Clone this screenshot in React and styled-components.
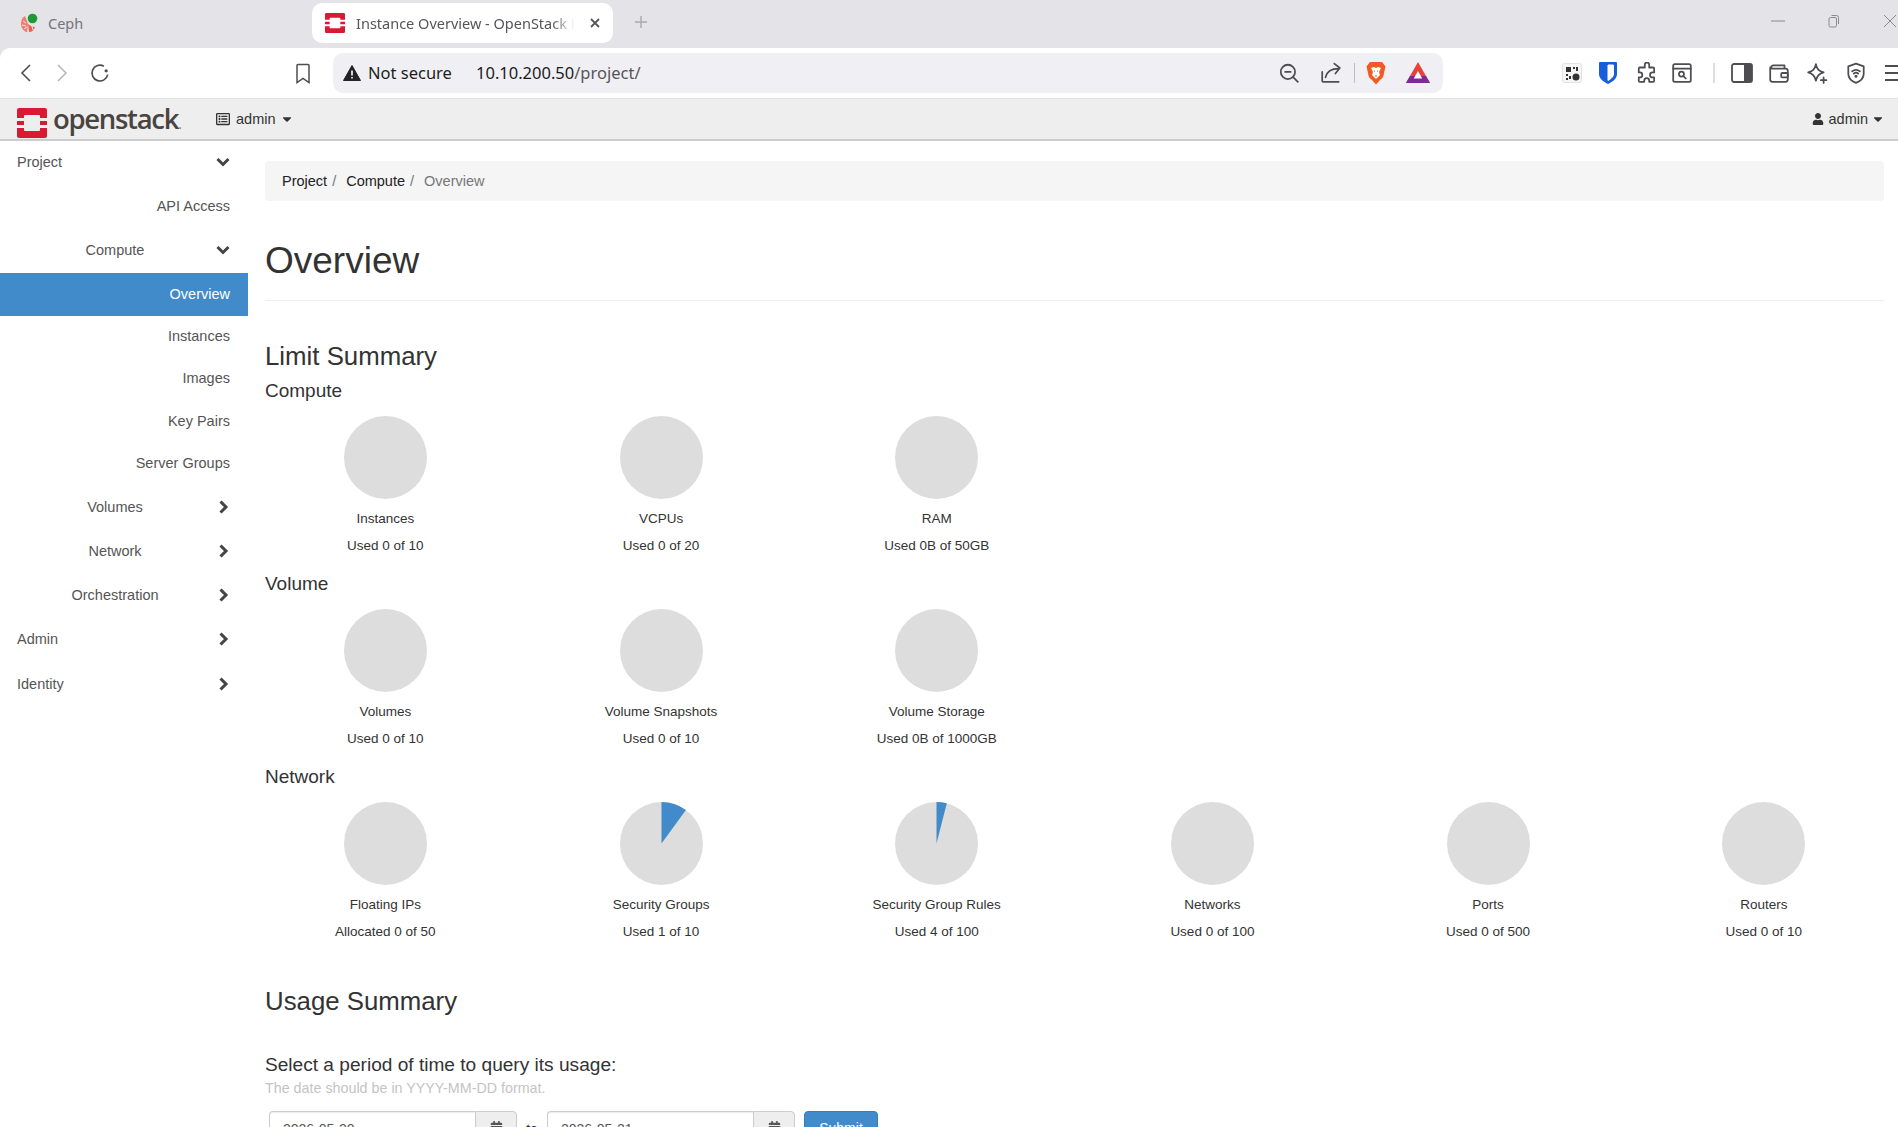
import React from "react";
import styled, { createGlobalStyle } from "styled-components";
import { FaCalendarAlt, FaCaretDown, FaRegListAlt, FaUser } from "react-icons/fa";

const GlobalStyle = createGlobalStyle`
  html, body {
    margin: 0;
    padding: 0;
    height: 1127px;
    overflow: hidden;
    background: #fff;
    font-family: "Liberation Sans", Arial, sans-serif;
    font-size: 14px;
    color: #333;
  }
  * { box-sizing: border-box; }
`;

const Page = styled.div`
  width: 1898px;
  height: 1127px;
  overflow: hidden;
  display: flex;
  flex-direction: column;
  background: #e3e3e8;
`;

/* browser chrome */
const TabStrip = styled.div`
  height: 48px;
  flex: none;
  background: #e3e3e8;
  display: flex;
  align-items: flex-start;
  font-family: "Noto Sans", "Liberation Sans", sans-serif;
`;
const InactiveTab = styled.div`
  width: 312px;
  height: 40px;
  margin-top: 3px;
  padding-left: 19px;
  display: flex;
  align-items: center;
  gap: 9px;
  font-size: 14.5px;
  color: #75757a;
`;
const ActiveTab = styled.div`
  width: 301px;
  height: 40px;
  margin-top: 3px;
  padding: 0 12px 0 13px;
  background: #fff;
  border-radius: 10px;
  display: flex;
  align-items: center;
  gap: 11px;
  font-size: 14.5px;
  color: #55555a;
`;
const TabTitle = styled.span`
  flex: 1;
  white-space: nowrap;
  overflow: hidden;
  margin-right: -1px;
  mask-image: linear-gradient(to right, #000 88%, transparent 98%);
`;
const NewTab = styled.div`
  margin: 14px 0 0 20px;
  color: #a9a9ae;
  line-height: 0;
`;
const WindowButtons = styled.div`
  margin-left: auto;
  display: flex;
  align-items: center;
  gap: 43px;
  margin-top: 14px;
  margin-right: 1px;
  color: #8a8a8f;
  line-height: 0;
`;
const Toolbar = styled.div`
  height: 50px;
  flex: none;
  background: #fff;
  border-radius: 10px 0 0 0;
  display: flex;
  align-items: center;
  padding-left: 16px;
  overflow: hidden;
`;
const ToolIcon = styled.span`
  width: ${(p) => p.$w || 36}px;
  margin-left: ${(p) => p.$ml || 0}px;
  display: flex;
  flex: none;
  justify-content: center;
  color: ${(p) => p.$color || "#4d4d52"};
  line-height: 0;
`;
const NavGroup = styled.div`
  display: flex;
  align-items: center;
  gap: 2px;
  width: 317px;
  flex: none;
`;
const AddressBar = styled.div`
  width: 1110px;
  height: 40px;
  flex: none;
  background: #f0f0f4;
  border-radius: 10px;
  display: flex;
  align-items: center;
  padding: 0 12px 0 10px;
  font-family: "Noto Sans", "Liberation Sans", sans-serif;
  font-size: 16.5px;
  color: #1d1d20;
`;
const NotSecure = styled.span`
  margin: -1px 0 0 7px;
  width: 108px;
  flex: none;
`;
const Url = styled.span`
  flex: 1;
  margin-top: -1px;
  color: #1b1b1e;
  b { font-weight: 400; color: #55555a; }
`;
const BarDivider = styled.span`
  width: 1px;
  height: 20px;
  margin: 0 9px 0 10px;
  background: #bdbdc2;
`;
const Extensions = styled.div`
  display: flex;
  align-items: center;
  margin-left: 112px;
  flex: none;
`;
const ToolDivider = styled.span`
  width: 2px;
  height: 20px;
  margin: 0 11px 0 15px;
  background: #dedee2;
`;

/* horizon top bar */
const TopNav = styled.div`
  height: 43px;
  flex: none;
  background: #eee;
  border-top: 1px solid #e2e2e2;
  border-bottom: 2px solid #ccc;
  display: flex;
  align-items: center;
  padding: 0 13px 0 17px;
`;
const Logo = styled.div`
  display: flex;
  align-items: center;
  gap: 6px;
  width: 199px;
  margin-top: 8px;
  flex: none;
`;
const LogoWord = styled.span`
  font-family: "Open Sans", "Liberation Sans", sans-serif;
  font-size: 27.5px;
  font-weight: 600;
  line-height: 30px;
  letter-spacing: -1.3px;
  color: #4a4440;
  position: relative;
  top: -2px;
  small {
    font-size: 14px;
    font-weight: 400;
    letter-spacing: 0;
    color: #888;
  }
`;
const NavDrop = styled.div`
  display: flex;
  align-items: center;
  gap: ${(p) => (p.$end ? 5 : 6)}px;
  font-size: 14.5px;
  color: #333;
  margin-bottom: 1px;
  ${(p) => p.$end && "margin-left: auto;"}
  svg { flex: none; }
  svg:last-child { margin-left: -2px; }
`;

const Body = styled.div`
  flex: 1;
  display: flex;
  min-height: 0;
  background: #fff;
`;

/* sidebar */
const Sidebar = styled.nav`
  width: 248px;
  flex: none;
  padding-top: 1px;
  color: #555;
`;
const NavRow = styled.div`
  height: ${(p) => p.$h || 44}px;
  margin-bottom: ${(p) => p.$mb || 0}px;
  display: flex;
  align-items: center;
  padding: 0 18px ${(p) => (p.$active ? 2 : 0)}px ${(p) => (p.$left ? 17 : 0)}px;
  font-size: 14.5px;
  color: ${(p) => (p.$active ? "#fff" : "#555")};
  background: ${(p) => (p.$active ? "#428bca" : "transparent")};
  justify-content: ${(p) => (p.$leaf ? "flex-end" : "space-between")};
`;
const GroupLabel = styled.span`
  flex: 1;
  text-align: center;
  padding-left: 13px;
`;
const Chevron = styled.span`
  color: #444;
  line-height: 0;
  margin-left: -1px;
`;

/* main content */
const Main = styled.main`
  flex: 1;
  min-width: 0;
  padding: 20px 14px 0 17px;
`;
const Breadcrumb = styled.div`
  height: 40px;
  background: #f5f5f5;
  border-radius: 4px;
  padding: 0 15px 0 17px;
  display: flex;
  align-items: center;
  font-size: 14.5px;
  color: #222;
`;
const Crumb = styled.span`
  color: ${(p) => (p.$current ? "#777" : "#222")};
  &:not(:last-child)::after {
    content: "/";
    color: #777;
    padding: 0 10px 0 5px;
  }
`;
const PageTitle = styled.h1`
  margin: 40px 0 0;
  padding-bottom: 19px;
  border-bottom: 1px solid #eee;
  font-size: 37px;
  line-height: 40px;
  font-weight: 500;
  color: #333;
`;
const SectionTitle = styled.h3`
  margin: ${(p) => p.$top}px 0 0;
  font-size: 25.8px;
  line-height: 26px;
  font-weight: 500;
  color: #333;
`;
const GroupTitle = styled.h4`
  margin: ${(p) => p.$top}px 0 0;
  font-size: 19px;
  line-height: 20px;
  font-weight: 500;
  color: #333;
`;
const PieRow = styled.div`
  margin: 15px 0 0 -17.5px;
  display: grid;
  grid-template-columns: repeat(6, 275.7px);
`;
const PieCell = styled.div`
  display: flex;
  flex-direction: column;
  align-items: center;
  text-align: center;
  font-size: 13.5px;
  color: #333;
`;
const PieLabel = styled.div`
  margin-top: 10px;
  line-height: 20px;
`;
const PieUsage = styled.div`
  margin-top: 7px;
  line-height: 20px;
`;
const PeriodTitle = styled.div`
  margin-top: 40px;
  font-size: 19.1px;
  line-height: 22px;
  color: #333;
`;
const HelpText = styled.div`
  margin-top: 2px;
  font-size: 14.3px;
  line-height: 20px;
  color: #c4c4c4;
`;
const DateForm = styled.div`
  margin: 13px 0 0 4px;
  display: flex;
  align-items: flex-start;
`;
const DateGroup = styled.div`
  display: flex;
  width: 248px;
  height: 34px;
`;
const DateInput = styled.div`
  width: 206px;
  height: 34px;
  padding: 7px 12px 0 13px;
  border: 1px solid #ccc;
  border-right: 0;
  border-radius: 4px 0 0 4px;
  box-shadow: inset 0 1px 1px rgba(0, 0, 0, 0.075);
  font-size: 14px;
  line-height: 20px;
  color: #555;
`;
const DateAddon = styled.div`
  flex: 1;
  background: #eee;
  border: 1px solid #ccc;
  border-radius: 0 4px 4px 0;
  color: #555;
  display: flex;
  justify-content: center;
  padding-top: 9px;
  line-height: 0;
`;
const ToLabel = styled.span`
  width: 30px;
  text-align: center;
  line-height: 34px;
  margin-top: 1px;
`;
const SubmitButton = styled.button`
  margin-left: 9px;
  width: 74px;
  height: 34px;
  border: 1px solid #357ebd;
  border-radius: 4px;
  background: #428bca;
  color: #fff;
  font: 14px "Liberation Sans", sans-serif;
`;

const Pie = ({ used = 0, total = 1 }) => {
  const r = 41.5;
  const a = (used / total) * 2 * Math.PI;
  const x = 41.5 + r * Math.sin(a);
  const y = 41.5 - r * Math.cos(a);
  return (
    <svg width="83" height="83" viewBox="0 0 83 83">
      <circle cx="41.5" cy="41.5" r={r} fill="#ddd" />
      {used > 0 && <path d={`M41.5 41.5V0A${r} ${r} 0 0 1 ${x} ${y}Z`} fill="#428bca" />}
    </svg>
  );
};

const OpenStackMark = ({ size = 30 }) => (
  <svg width={size} height={size} viewBox="0 0 30 30">
    <path
      d="M2 0h26a2 2 0 0 1 2 2v8h-7V8a1 1 0 0 0-1-1H8a1 1 0 0 0-1 1v2H0V2a2 2 0 0 1 2-2zM0 13h7v4H0zM23 13h7v4h-7zM0 20h7v2a1 1 0 0 0 1 1h14a1 1 0 0 0 1-1v-2h7v8a2 2 0 0 1-2 2H2a2 2 0 0 1-2-2z"
      fill="#da1a32"
    />
  </svg>
);

const ChevronIcon = ({ open }) => (
  <svg width="14" height="14" viewBox="0 0 14 14" fill="none" stroke="currentColor" strokeWidth="3">
    <path d={open ? "M1.500 4L7 9.500 12.500 4" : "M4.500 1.500L10 7l-5.500 5.500"} />
  </svg>
);

const stroke = { fill: "none", stroke: "currentColor", strokeWidth: 1.6, strokeLinecap: "round", strokeLinejoin: "round" };

const Glyph = ({ size = 20, children }) => (
  <svg width={size} height={size} viewBox="0 0 20 20" {...stroke}>
    {children}
  </svg>
);

const computeLimits = [
  { label: "Instances", usage: "Used 0 of 10" },
  { label: "VCPUs", usage: "Used 0 of 20" },
  { label: "RAM", usage: "Used 0B of 50GB" },
];
const volumeLimits = [
  { label: "Volumes", usage: "Used 0 of 10" },
  { label: "Volume Snapshots", usage: "Used 0 of 10" },
  { label: "Volume Storage", usage: "Used 0B of 1000GB" },
];
const networkLimits = [
  { label: "Floating IPs", usage: "Allocated 0 of 50" },
  { label: "Security Groups", usage: "Used 1 of 10", used: 1, total: 10 },
  { label: "Security Group Rules", usage: "Used 4 of 100", used: 4, total: 100 },
  { label: "Networks", usage: "Used 0 of 100" },
  { label: "Ports", usage: "Used 0 of 500" },
  { label: "Routers", usage: "Used 0 of 10" },
];

const Limits = ({ items }) => (
  <PieRow>
    {items.map((item) => (
      <PieCell key={item.label}>
        <Pie used={item.used} total={item.total} />
        <PieLabel>{item.label}</PieLabel>
        <PieUsage>{item.usage}</PieUsage>
      </PieCell>
    ))}
  </PieRow>
);

const SideGroup = ({ label, open, left, h, mb }) => (
  <NavRow $left={left} $h={h} $mb={mb}>
    {left ? <span>{label}</span> : <GroupLabel>{label}</GroupLabel>}
    <Chevron><ChevronIcon open={open} /></Chevron>
  </NavRow>
);

const BrowserChrome = () => (
  <>
    <TabStrip>
      <InactiveTab>
        <svg width="20" height="20" viewBox="0 0 20 20" fill="none">
          <path d="M6 3C2 5 1 11 3 15c1 2 3 4 5 4l1-8z" fill="#ef7d6f" />
          <path d="M9 11l1 8c3 0 5-2 6-5-2 0-5-1-7-3z" fill="#ec5f52" />
          <path d="M4 8l3 2M3 12l4 1M5 16l3-2M13 13l1 4" stroke="#fbe3df" strokeWidth="1" />
          <circle cx="13.500" cy="5.500" r="4.800" fill="#1d9a33" />
        </svg>
        Ceph
      </InactiveTab>
      <ActiveTab>
        <OpenStackMark size={20} />
        <TabTitle>Instance Overview - OpenStack Dashboard</TabTitle>
        <svg width="12" height="12" viewBox="0 0 12 12" fill="none" stroke="#55555a" strokeWidth="1.8">
          <path d="M2 2l8 8M10 2l-8 8" />
        </svg>
      </ActiveTab>
      <NewTab>
        <svg width="16" height="16" viewBox="0 0 16 16" fill="none" stroke="currentColor" strokeWidth="1.4">
          <path d="M8 2v12M2 8h12" />
        </svg>
      </NewTab>
      <WindowButtons>
        <svg width="14" height="2" viewBox="0 0 14 2" stroke="currentColor"><path d="M0 1h14" /></svg>
        <svg width="12" height="14" viewBox="0 0 12 14" fill="none" stroke="currentColor">
          <rect x="1" y="3.5" width="7.5" height="9.5" rx="1.5" />
          <path d="M3.5 1.5h5a2 2 0 0 1 2 2V10" />
        </svg>
        <svg width="14" height="14" viewBox="0 0 14 14" fill="none" stroke="currentColor"><path d="M1 1l12 12M13 1L1 13" /></svg>
      </WindowButtons>
    </TabStrip>
    <Toolbar>
      <NavGroup>
        <ToolIcon $w={20}>
          <svg width="12" height="20" viewBox="0 0 12 20" fill="none" stroke="#4d4d52" strokeWidth="1.6"><path d="M10 2L2 10l8 8" /></svg>
        </ToolIcon>
        <ToolIcon $w={48} $color="#b0b0b5">
          <svg width="12" height="20" viewBox="0 0 12 20" fill="none" stroke="currentColor" strokeWidth="1.4"><path d="M2 2l8 8-8 8" /></svg>
        </ToolIcon>
        <ToolIcon $w={24}>
          <svg width="22" height="22" viewBox="0 0 20 20" fill="none" stroke="currentColor" strokeWidth="1.5">
            <path d="M17 11.500A7.200 7.200 0 1 1 13.500 3.800" />
            <circle cx="15.600" cy="8" r="1.500" fill="currentColor" stroke="none" />
          </svg>
        </ToolIcon>
        <ToolIcon $w={20} $ml={179}>
          <svg width="14" height="21" viewBox="0 0 14 21" fill="none" stroke="currentColor" strokeWidth="1.5">
            <path d="M2 1.500h10a1 1 0 0 1 1 1v17l-6-4-6 4v-17a1 1 0 0 1 1-1z" />
          </svg>
        </ToolIcon>
      </NavGroup>
      <AddressBar>
        <svg width="18" height="16" viewBox="0 0 18 16">
          <path d="M9 .5l8.500 15H.5z" fill="#222" stroke="#222" strokeLinejoin="round" />
          <path d="M9 5.500v5M9 12v1.600" stroke="#fff" strokeWidth="1.6" />
        </svg>
        <NotSecure>Not secure</NotSecure>
        <Url>10.10.200.50<b>/project/</b></Url>
        <ToolIcon $w={26}>
          <Glyph size={22}>
            <circle cx="9" cy="9" r="6.500" />
            <path d="M14 14l4 4M6.500 9h5" />
          </Glyph>
        </ToolIcon>
        <ToolIcon $w={26} $ml={16}>
          <Glyph size={22}>
            <path d="M2 9v8a1 1 0 0 0 1 1h14M5 14c1-5 5-8 12-8M13 1.500l5 4-4 5" />
          </Glyph>
        </ToolIcon>
        <BarDivider />
        <ToolIcon $w={24}>
          <svg width="20" height="24" viewBox="0 0 20 24">
            <path d="M4 1h12l2 2.500 1.500 2-2 9c-.5 2-1.500 3-3 4L10 23.500 5.500 18.500c-1.500-1-2.500-2-3-4l-2-9L2 3.500z" fill="#f15a22" />
            <path d="M5 7l3-1 2 1 2-1 3 1-2 4 1 3-3 3-1 1-1-1-3-3 1-3z" fill="#fff" />
            <path d="M8 10h1M11 10h1M9 15h2" stroke="#f15a22" strokeWidth="1.2" />
          </svg>
        </ToolIcon>
        <ToolIcon $w={26} $ml={17}>
          <svg width="24" height="22" viewBox="0 0 24 22">
            <path d="M12 0l12 21H0z" fill="#e8413a" />
            <path d="M0 21l4-7h16l4 7z" fill="#7b2d90" />
            <path d="M12 9l4.200 7.500H7.800z" fill="#fff" />
          </svg>
        </ToolIcon>
      </AddressBar>
      <Extensions>
        <ToolIcon $w={33}>
          <svg width="20" height="20" viewBox="0 0 20 20">
            <rect x=".5" y=".5" width="19" height="19" rx="2" fill="#f5f5f5" stroke="#e2e2e2" />
            <path d="M4 4h5v5H4zM11 4h2v2h-2zM14 4h2v4h-2zM4 11h2v2H4zM7 13h2v3H7zM4 15h2v2H4z" fill="#333" />
            <circle cx="14" cy="14" r="3.500" fill="#333" />
          </svg>
        </ToolIcon>
        <ToolIcon $w={40}>
          <svg width="20" height="24" viewBox="0 0 20 24">
            <path d="M2 1h16a1 1 0 0 1 1 1v11c0 5-5 8-9 10-4-2-9-5-9-10V2a1 1 0 0 1 1-1z" fill="#175ddc" />
            <path d="M10 4h5.500v9c0 3-3 5-5.500 6.500z" fill="#fff" stroke="#fff" />
          </svg>
        </ToolIcon>
        <ToolIcon $w={38}>
          <Glyph size={22}>
            <path d="M8 2.500a2 2 0 0 1 4 0V5h3.500a1 1 0 0 1 1 1v3.500h-1.500a2.200 2.200 0 0 0 0 4.500h1.500V17a1 1 0 0 1-1 1h-3.500v-1a2.200 2.200 0 0 0-4.500 0v1H3.500a1 1 0 0 1-1-1v-3h1a2.200 2.200 0 0 0 0-4.500h-1V6a1 1 0 0 1 1-1H8z" />
          </Glyph>
        </ToolIcon>
        <ToolIcon $w={32}>
          <Glyph size={22}>
            <rect x="2" y="2" width="16" height="16" rx="1.500" />
            <path d="M2 6h16" />
            <circle cx="9.500" cy="11" r="2.300" />
            <path d="M11.500 13l2 2" />
          </Glyph>
        </ToolIcon>
        <ToolDivider />
        <ToolIcon $w={32}>
          <svg width="22" height="20" viewBox="0 0 22 20">
            <rect x="1" y="1" width="20" height="18" rx="2" fill="none" stroke="#4d4d52" strokeWidth="1.8" />
            <path d="M13 1h6a2 2 0 0 1 2 2v14a2 2 0 0 1-2 2h-6z" fill="#4d4d52" />
          </svg>
        </ToolIcon>
        <ToolIcon $w={38} $ml={2}>
          <Glyph size={22}>
            <path d="M3 5a2 2 0 0 1 2-2h10v3M2 5v11a2 2 0 0 0 2 2h12a2 2 0 0 0 2-2V8a2 2 0 0 0-2-2H3" />
            <rect x="12" y="10" width="6" height="4" rx="1" />
          </Glyph>
        </ToolIcon>
        <ToolIcon $w={38}>
          <Glyph size={22}>
            <path d="M9 2c1 5 3 6.500 7 7.500-4 1-6 3-7 7.500-1-4.500-3-6.500-7-7.500 4-1 6-2.500 7-7.500zM16 14v5M13.500 16.500h5" />
          </Glyph>
        </ToolIcon>
        <ToolIcon $w={36} $ml={2}>
          <Glyph size={22}>
            <path d="M10 1.500l7 2.500v7c0 4-3 6.500-7 8-4-1.500-7-4-7-8V4z" />
            <path d="M6.500 8.500a5 5 0 0 1 7 0M8 10.500a2.800 2.800 0 0 1 4 0" />
            <circle cx="10" cy="13" r=".6" fill="currentColor" />
          </Glyph>
        </ToolIcon>
        <ToolIcon $w={36} $ml={2}>
          <svg width="20" height="16" viewBox="0 0 20 16" stroke="currentColor" strokeWidth="1.8"><path d="M1 1h18M1 8h18M1 15h18" /></svg>
        </ToolIcon>
      </Extensions>
    </Toolbar>
  </>
);

const App = () => (
  <Page>
    <GlobalStyle />
    <BrowserChrome />
    <TopNav>
      <Logo>
        <OpenStackMark />
        <LogoWord>openstack<small>.</small></LogoWord>
      </Logo>
      <NavDrop>
        <FaRegListAlt size={14} color="#333" />
        admin
        <FaCaretDown size={14} />
      </NavDrop>
      <NavDrop $end>
        <FaUser size={12} color="#333" />
        admin
        <FaCaretDown size={14} />
      </NavDrop>
    </TopNav>
    <Body>
      <Sidebar>
        <SideGroup label="Project" open left h={40} />
        <NavRow $leaf $h={48}>API Access</NavRow>
        <SideGroup label="Compute" open h={40} mb={3} />
        <NavRow $leaf $active $h={43}>Overview</NavRow>
        <NavRow $leaf $h={40}>Instances</NavRow>
        <NavRow $leaf $h={44}>Images</NavRow>
        <NavRow $leaf $h={42}>Key Pairs</NavRow>
        <NavRow $leaf $h={42}>Server Groups</NavRow>
        <SideGroup label="Volumes" h={45} />
        <SideGroup label="Network" h={44} />
        <SideGroup label="Orchestration" h={43} />
        <SideGroup label="Admin" left h={45} />
        <SideGroup label="Identity" left h={46} />
      </Sidebar>
      <Main>
        <Breadcrumb>
          <Crumb>Project</Crumb>
          <Crumb>Compute</Crumb>
          <Crumb $current>Overview</Crumb>
        </Breadcrumb>
        <PageTitle>Overview</PageTitle>
        <SectionTitle $top={42}>Limit Summary</SectionTitle>
        <GroupTitle $top={12}>Compute</GroupTitle>
        <Limits items={computeLimits} />
        <GroupTitle $top={18}>Volume</GroupTitle>
        <Limits items={volumeLimits} />
        <GroupTitle $top={18}>Network</GroupTitle>
        <Limits items={networkLimits} />
        <SectionTitle $top={46}>Usage Summary</SectionTitle>
        <PeriodTitle>Select a period of time to query its usage:</PeriodTitle>
        <HelpText>The date should be in YYYY-MM-DD format.</HelpText>
        <DateForm>
          <DateGroup>
            <DateInput>2026-05-20</DateInput>
            <DateAddon><FaCalendarAlt size={13} /></DateAddon>
          </DateGroup>
          <ToLabel>to</ToLabel>
          <DateGroup>
            <DateInput>2026-05-21</DateInput>
            <DateAddon><FaCalendarAlt size={13} /></DateAddon>
          </DateGroup>
          <SubmitButton>Submit</SubmitButton>
        </DateForm>
      </Main>
    </Body>
  </Page>
);

export default App;
